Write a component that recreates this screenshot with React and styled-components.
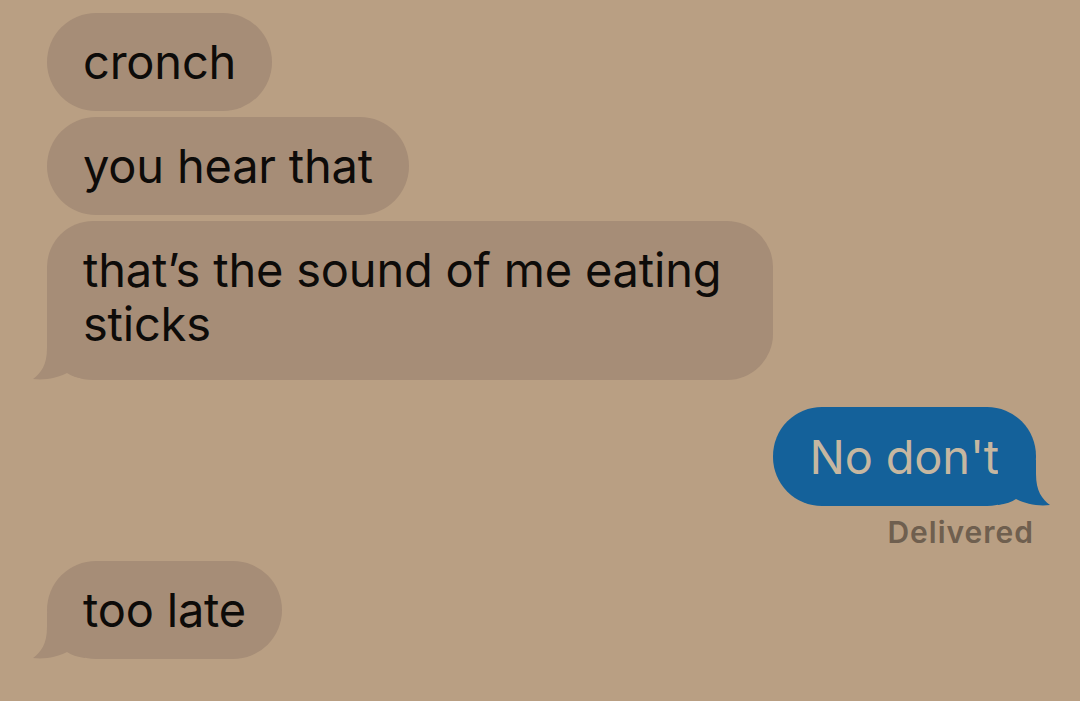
import React from 'react'
import styled, { createGlobalStyle } from 'styled-components'

const GlobalStyle = createGlobalStyle`
  html, body {
    margin: 0;
    padding: 0;
    background: #b99f83;
  }
  body {
    font-family: Inter, "Liberation Sans", sans-serif;
  }
`

const incoming = [
  { text: 'cronch' },
  { text: 'you hear that' },
  { text: 'that\u2019s the sound of me eating sticks', tail: true },
]

function Tail({ side, color }) {
  return (
    <TailSvg side={side} width="52" height="46" viewBox="0 0 52 46">
      <path
        d="M14 0 L14 14 C14 31 8 39 0 45 C12 46.5 24 44 34 39 C38 42 44 44 52 45 L52 0 Z"
        fill={color}
      />
    </TailSvg>
  )
}

function App() {
  return (
    <Page>
      <GlobalStyle />
      <Thread>
        <Group>
          {incoming.map((m) => (
            <Bubble key={m.text} wide={m.tail}>
              {m.text}
              {m.tail && <Tail side="left" color="#a68d77" />}
            </Bubble>
          ))}
        </Group>

        <Outgoing>
          <BlueBubble>
            No don't
            <Tail side="right" color="#14619a" />
          </BlueBubble>
          <Status>Delivered</Status>
        </Outgoing>

        <Group>
          <Bubble>
            too late
            <Tail side="left" color="#a68d77" />
          </Bubble>
        </Group>
      </Thread>
    </Page>
  )
}

export default App

const Page = styled.div`
  width: 1080px;
  height: 701px;
  overflow: hidden;
  background: #b99f83;
`

const Thread = styled.div`
  display: flex;
  flex-direction: column;
  padding: 13px 44px 0 47px;
`

const Group = styled.div`
  display: flex;
  flex-direction: column;
  align-items: flex-start;
  gap: 6px;
`

const Bubble = styled.div`
  position: relative;
  background: #a68d77;
  color: #0d0b09;
  font-size: 47px;
  line-height: 54px;
  letter-spacing: -0.2px;
  padding: 22px 36px;
  border-radius: 49px;
  box-sizing: border-box;
  ${(p) => p.wide && 'width: 726px; padding-bottom: 29px; border-radius: 46px;'}
`

const TailSvg = styled.svg`
  position: absolute;
  bottom: 0;
  ${(p) =>
    p.side === 'left'
      ? 'left: -14px;'
      : 'right: -14px; transform: scaleX(-1);'}
`

const Outgoing = styled.div`
  display: flex;
  flex-direction: column;
  align-items: flex-end;
  margin-top: 27px;
  margin-bottom: 12px;
`

const BlueBubble = styled.div`
  position: relative;
  background: #14619a;
  color: #c6b7a1;
  font-size: 47px;
  line-height: 55px;
  letter-spacing: -0.2px;
  padding: 22px 37px;
  border-radius: 49px;
`

const Status = styled.div`
  margin-top: 9px;
  margin-right: 2px;
  font-size: 30px;
  font-weight: 600;
  letter-spacing: 1px;
  color: #6f5f4f;
  line-height: 34px;
`
